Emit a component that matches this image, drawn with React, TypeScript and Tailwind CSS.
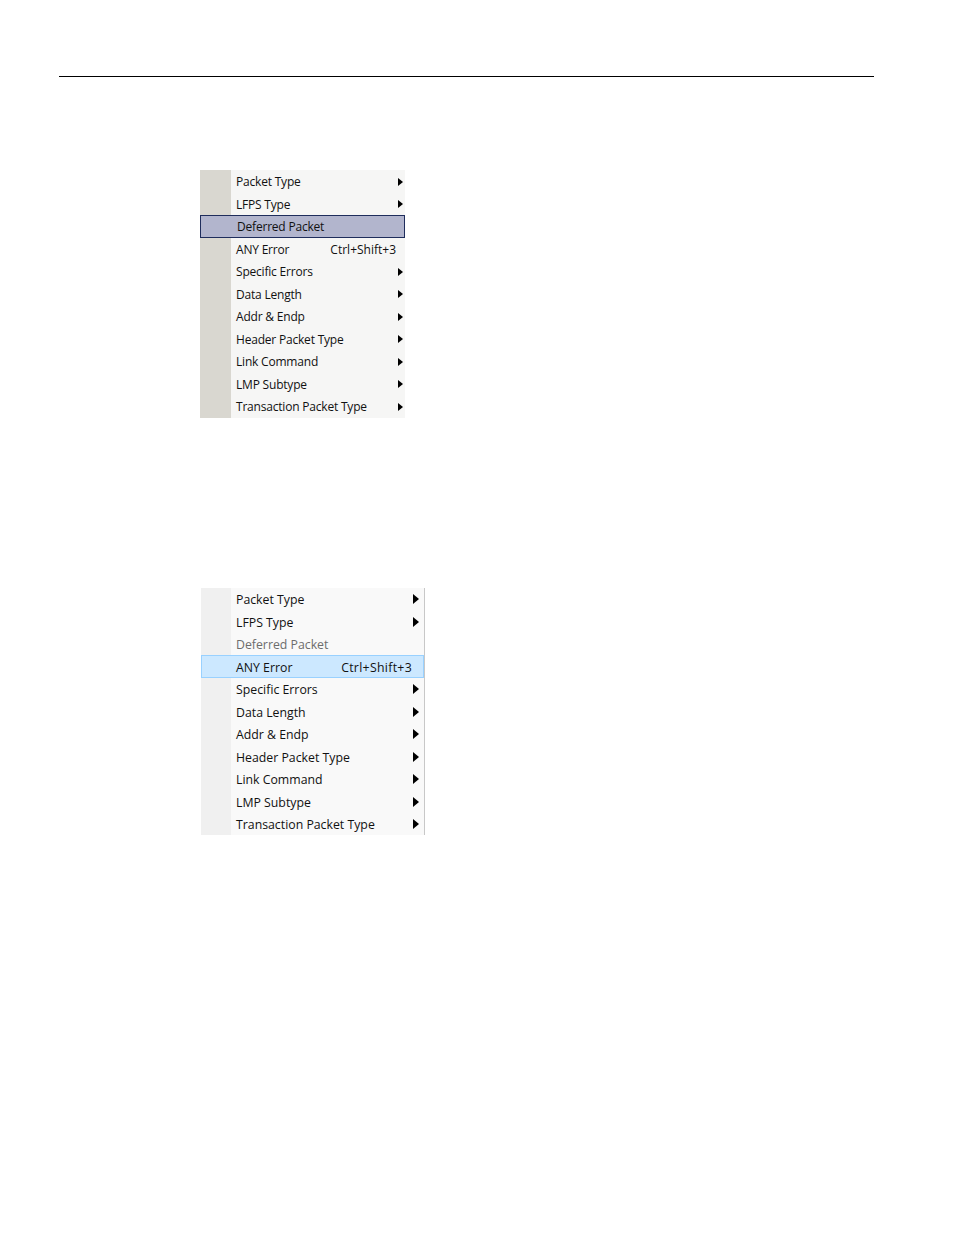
const items = [
  'Packet Type',
  'LFPS Type',
  'Deferred Packet',
  'ANY Error',
  'Specific Errors',
  'Data Length',
  'Addr & Endp',
  'Header Packet Type',
  'Link Command',
  'LMP Subtype',
  'Transaction Packet Type',
];

const leaf = ['Deferred Packet', 'ANY Error'];

const Arrow = ({ big }: { big?: boolean }) => (
  <svg
    width={big ? 6 : 5}
    height={big ? 10 : 8}
    viewBox={big ? '0 0 6 10' : '0 0 5 8'}
    className="block"
  >
    <path d={big ? 'M0 0L6 5L0 10Z' : 'M0 0L5 4L0 8Z'} fill="#000" />
  </svg>
);

const OldMenu = () => (
  <div className="flex w-[205px] bg-[#f6f6f5] font-['Open_Sans',sans-serif] text-[12px] text-[#111]">
    <div className="w-[31px] shrink-0 bg-[#d9d7d0]" />
    <div className="flex-1">
      {items.map((t) => {
        const hot = t === 'Deferred Packet';
        return (
          <div
            key={t}
            className={
              'relative -ml-[31px] flex h-[22.5px] items-center pl-[36px] ' +
              (hot ? 'border border-[#1f2d5c] bg-[#b2b5cd] pl-[35px] pr-0' : 'pr-[1px]')
            }
          >
            <span className="flex-1 pt-[2px] tracking-[-0.2px]">{t}</span>
            {t === 'ANY Error' && <span className="mr-[8px] pt-[2px]">Ctrl+Shift+3</span>}
            {!leaf.includes(t) && (
              <span className="mr-[1px] pt-[1px]">
                <Arrow />
              </span>
            )}
          </div>
        );
      })}
    </div>
  </div>
);

const NewMenu = () => (
  <div className="flex w-[224px] border-r border-[#c8c8c8] bg-[#f9f9f9] font-['Open_Sans',sans-serif] text-[12.3px] text-[#111]">
    <div className="w-[30px] shrink-0 bg-[#f0f0f0]" />
    <div className="flex-1">
      {items.map((t) => {
        const hot = t === 'ANY Error';
        const off = t === 'Deferred Packet';
        return (
          <div
            key={t}
            className={
              'relative -ml-[30px] flex h-[22.5px] items-center ' +
              (hot ? 'border border-[#99d1ff] bg-[#cce8ff] pl-[34px] pr-[4px]' : 'pl-[35px] pr-[5px]') +
              (off ? ' text-[#6d6d6d]' : '')
            }
          >
            <span className="flex-1 pt-[3px]">{t}</span>
            {hot && <span className="mr-[7px] pt-[3px] tracking-[0.3px]">Ctrl+Shift+3</span>}
            {!leaf.includes(t) && (
              <span className="pt-[1px]">
                <Arrow big />
              </span>
            )}
          </div>
        );
      })}
    </div>
  </div>
);

export default function App() {
  return (
    <div className="min-h-[1235px] w-[954px] bg-white">
      <div className="pt-[76px] pl-[59px]">
        <div className="h-px w-[815px] bg-black" />
      </div>
      <div className="mt-[93px] pl-[200px]">
        <OldMenu />
      </div>
      <div className="mt-[170px] pl-[201px]">
        <NewMenu />
      </div>
    </div>
  );
}
